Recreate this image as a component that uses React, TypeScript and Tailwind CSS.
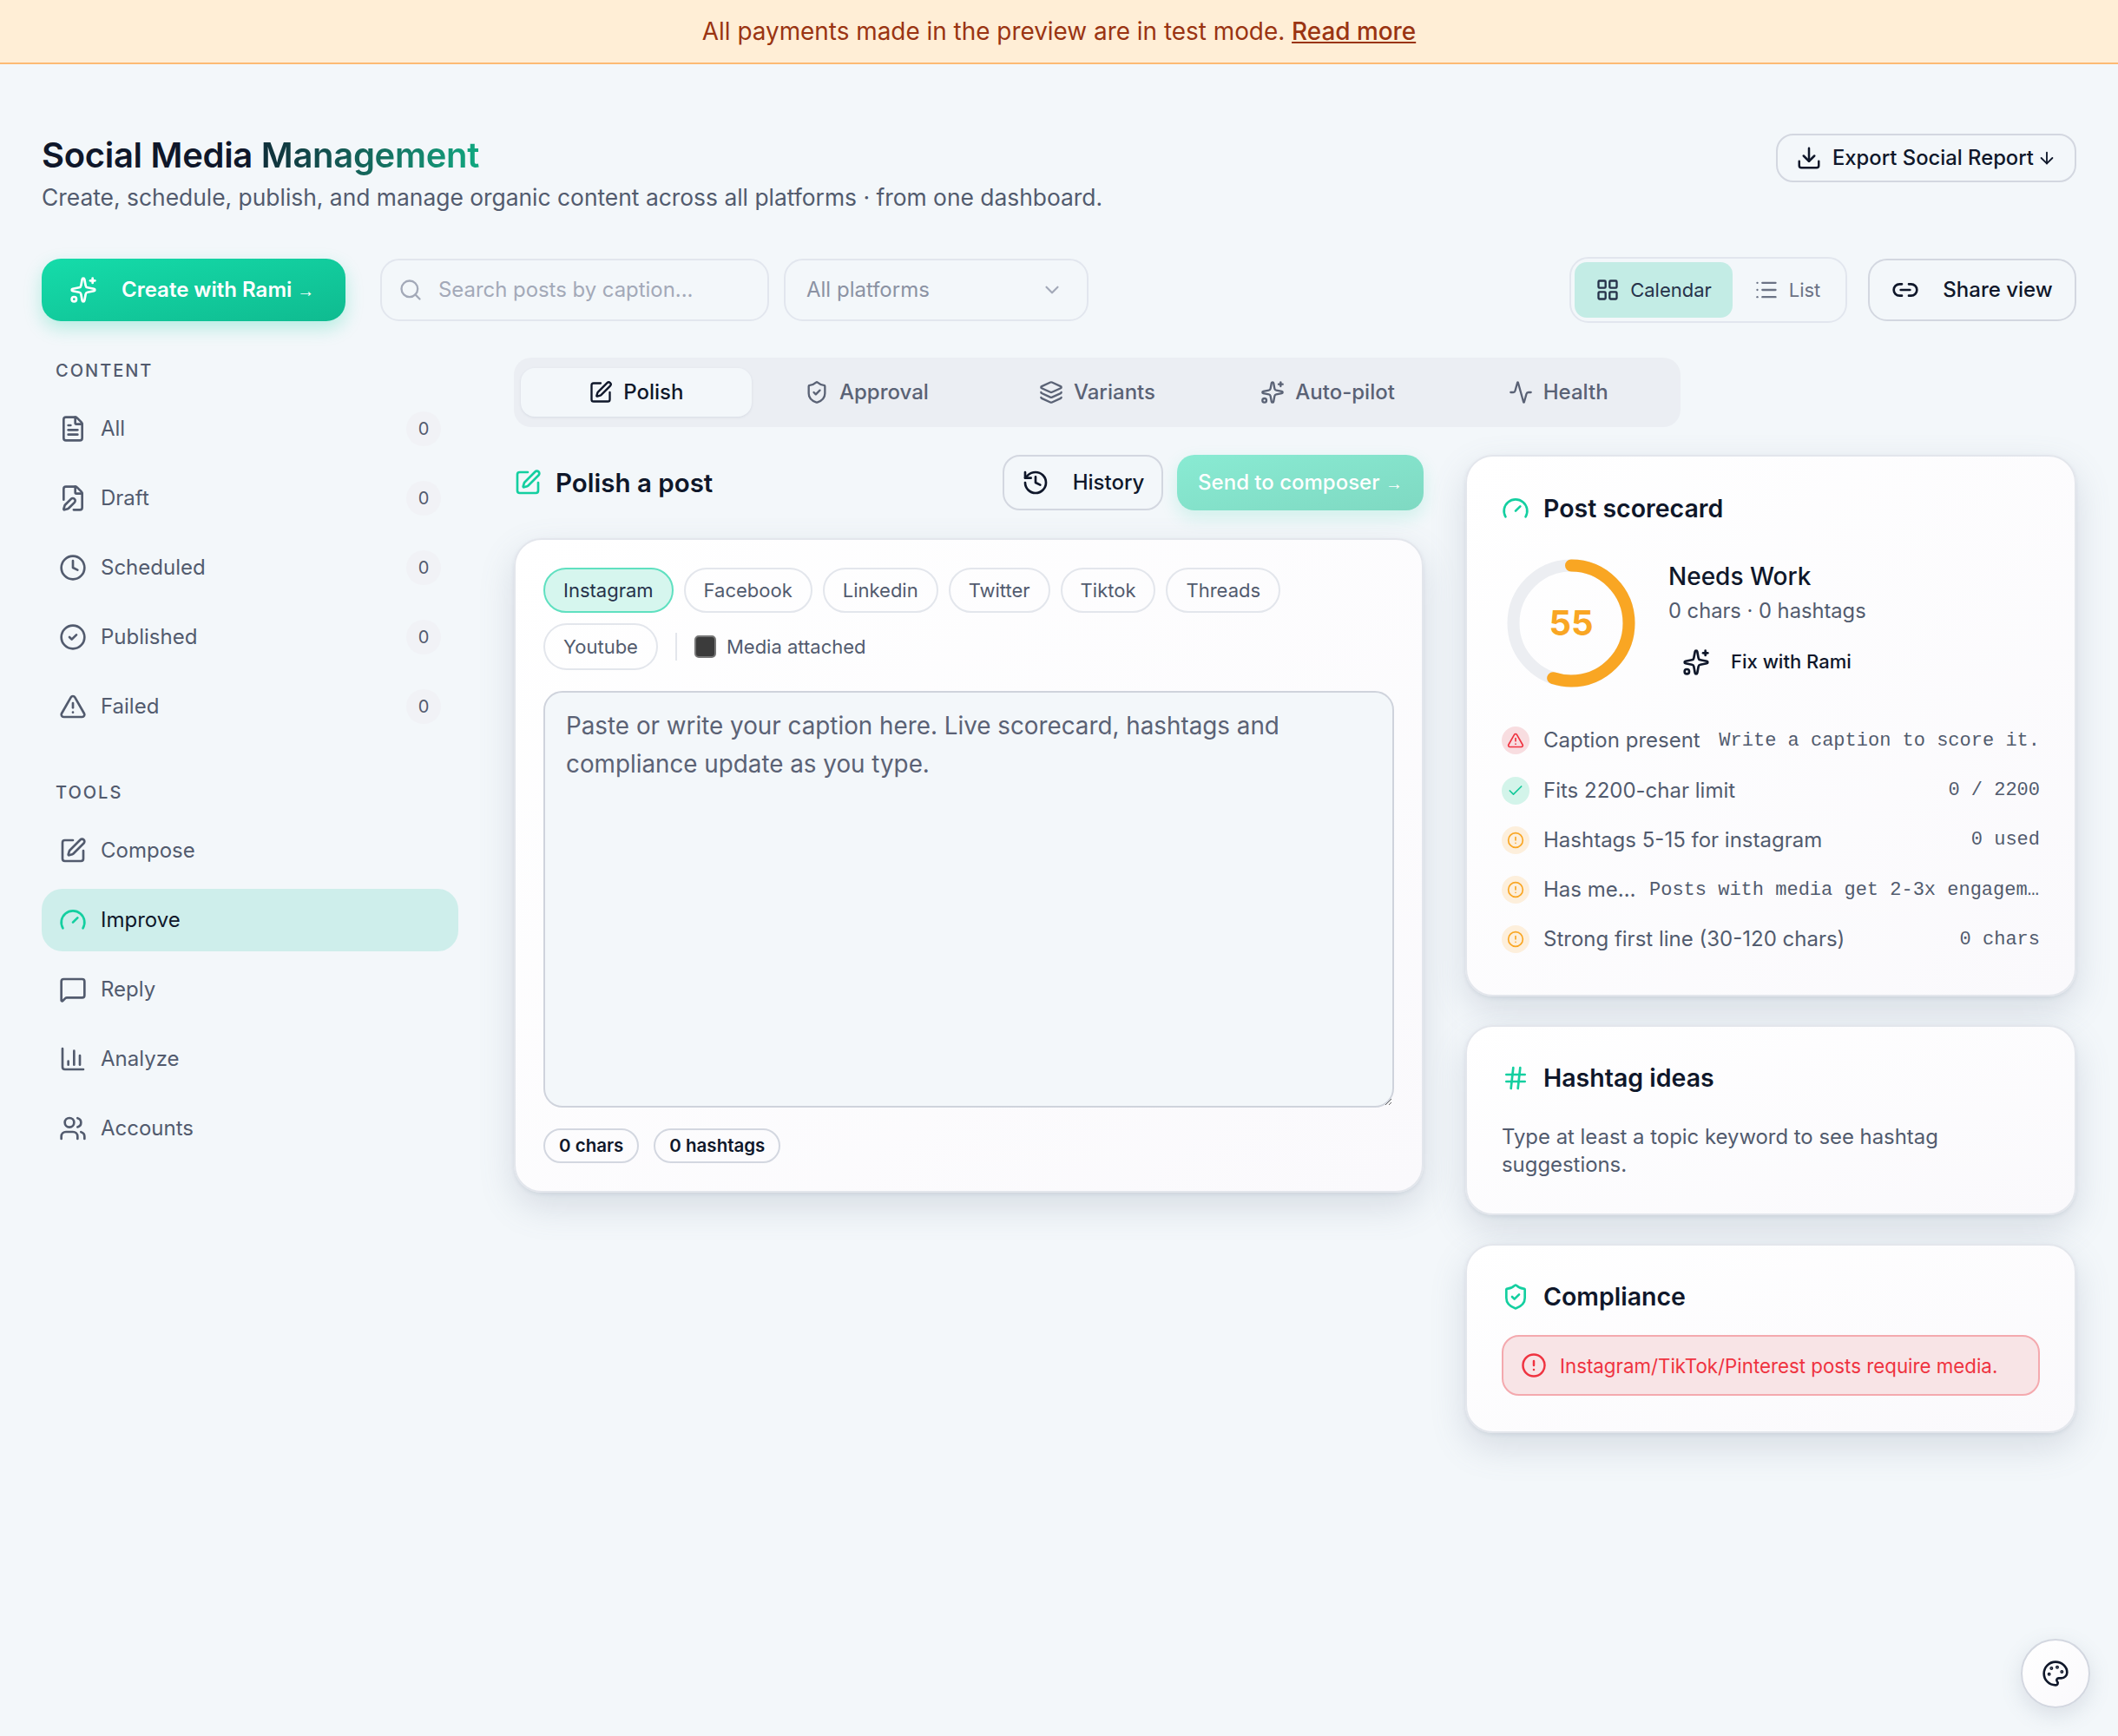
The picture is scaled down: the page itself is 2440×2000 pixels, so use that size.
import React from 'react';
import {
  Activity, ArrowDown, Check, ChevronDown, CircleAlert, CircleCheck, Clock, Download, FilePen, FileText, Gauge, Hash,
  History, Layers, LayoutGrid, Link2, List, MessageSquare, Palette, Search, ShieldCheck, Sparkles, SquarePen, TriangleAlert,
  ChartColumn, Users,
} from 'lucide-react';

const contentNav = [
  { label: 'All', icon: FileText },
  { label: 'Draft', icon: FilePen },
  { label: 'Scheduled', icon: Clock },
  { label: 'Published', icon: CircleCheck },
  { label: 'Failed', icon: TriangleAlert },
];

const toolsNav = [
  { label: 'Compose', icon: SquarePen },
  { label: 'Improve', icon: Gauge, active: true },
  { label: 'Reply', icon: MessageSquare },
  { label: 'Analyze', icon: ChartColumn },
  { label: 'Accounts', icon: Users },
];

const tabs = [
  { label: 'Polish', icon: SquarePen, active: true },
  { label: 'Approval', icon: ShieldCheck },
  { label: 'Variants', icon: Layers },
  { label: 'Auto-pilot', icon: Sparkles },
  { label: 'Health', icon: Activity },
];

const platforms = ['Facebook', 'Linkedin', 'Twitter', 'Tiktok', 'Threads'];

const checks = [
  { label: 'Caption present', note: 'Write a caption to score it.', kind: 'fail' },
  { label: 'Fits 2200-char limit', note: '0 / 2200', kind: 'ok' },
  { label: 'Hashtags 5-15 for instagram', note: '0 used', kind: 'warn' },
  { label: 'Has media attached', note: 'Posts with media get 2-3x engagement on this platform', kind: 'warn' },
  { label: 'Strong first line (30-120 chars)', note: '0 chars', kind: 'warn' },
];

const cardClass =
  'rounded-[32px] border-2 border-[#e3e6ec] bg-gradient-to-br from-white to-[#faf9fc] shadow-[0_2px_4px_rgba(100,116,139,0.12),0_16px_40px_rgba(100,116,139,0.2)]';

function CheckIcon({ kind }: { kind: string }) {
  if (kind === 'fail') {
    return (
      <span className="flex h-8 w-8 shrink-0 items-center justify-center rounded-full bg-[#f8dde0] text-[#ef3340]">
        <TriangleAlert size={20} />
      </span>
    );
  }
  if (kind === 'ok') {
    return (
      <span className="flex h-8 w-8 shrink-0 items-center justify-center rounded-full bg-[#d3f4ea] text-[#14c99a]">
        <Check size={20} />
      </span>
    );
  }
  return (
    <span className="flex h-8 w-8 shrink-0 items-center justify-center rounded-full bg-[#fdefdc] text-[#f9a623]">
      <CircleAlert size={20} />
    </span>
  );
}

function NavRow({ item, count }: { item: { label: string; icon: React.ElementType; active?: boolean }; count?: boolean }) {
  const Icon = item.icon;
  return (
    <div
      className={`flex h-[72px] items-center rounded-[24px] pl-5 pr-5 text-[24px] ${
        item.active ? 'bg-[#ceeeeb] text-[#0f172a]' : 'text-[#525b6e]'
      }`}
    >
      <Icon size={32} className={`mr-4 shrink-0 ${item.active ? 'text-[#14cfa0]' : ''}`} />
      <span className="flex-1">{item.label}</span>
      {count && (
        <span className="flex h-10 w-10 items-center justify-center rounded-full bg-[#f1f2f6] text-[20px] text-[#525b6e]">0</span>
      )}
    </div>
  );
}

export default function App() {
  return (
    <div className="relative min-h-[2000px] bg-[#f3f7fa] font-['Inter',sans-serif] text-[#0f172a]">
      <div className="flex h-[74px] items-center justify-center border-b-2 border-[#fdba74] bg-[#ffeed6] text-[27.9px] text-[#9a3412]">
        <span className="pt-[2px]">
          All payments made in the preview are in test mode. <span className="font-medium underline">Read more</span>
        </span>
      </div>

      <div className="px-12 pt-20">
        <div className="flex items-start justify-between">
          <div>
            <h1 className="text-[40px] font-semibold leading-[50px] tracking-[-0.3px]">
              Social Media{' '}
              <span className="bg-gradient-to-r from-[#0f2f3a] to-[#10a880] bg-clip-text text-transparent">Management</span>
            </h1>
            <p className="mt-[3px] text-[26.4px] leading-[40px] text-[#525b6e]">
              Create, schedule, publish, and manage organic content across all platforms · from one dashboard.
            </p>
          </div>
          <button className="flex h-[56px] w-[346px] items-center justify-center gap-3 rounded-[20px] border-2 border-[#d3d7e0] text-[23.8px] font-medium">
            <Download size={30} />
            <span className="flex items-center gap-1">
              Export Social Report <ArrowDown size={22} />
            </span>
          </button>
        </div>

        <div className="mt-[49px] flex items-center">
          <button className="flex h-[72px] w-[350px] items-center gap-[28px] rounded-[22px] bg-gradient-to-br from-[#15dcaa] to-[#0fbb90] pl-[32px] text-[24px] font-semibold text-white shadow-[0_8px_20px_rgba(20,212,164,0.28)]">
            <Sparkles size={32} className="shrink-0" />
            <span>
              Create with Rami <span className="font-['Liberation_Sans',sans-serif] text-[20px] font-normal">→</span>
            </span>
          </button>
          <div className="ml-10 flex h-[72px] w-[448px] items-center gap-[18px] rounded-[22px] border-2 border-[#e2e6ee] pl-[19px] text-[23.9px] text-[#a3a9b8]">
            <Search size={28} className="shrink-0" />
            <span>Search posts by caption...</span>
          </div>
          <div className="ml-[17px] flex h-[72px] w-[351px] items-center justify-between rounded-[22px] border-2 border-[#e2e6ee] pl-6 pr-[27px] text-[24px] text-[#8b92a3]">
            <span>All platforms</span>
            <ChevronDown size={26} className="text-[#a3a9b8]" />
          </div>
          <div className="ml-auto flex h-[76px] w-[320px] items-center rounded-[22px] border-2 border-[#e2e6ee] pl-1 pr-1">
            <div className="flex h-16 w-[182px] items-center justify-center gap-3 rounded-[14px] bg-[#c3ece5] text-[22px] text-[#26324a]">
              <LayoutGrid size={28} />
              Calendar
            </div>
            <div className="flex flex-1 items-center justify-center gap-3 text-[22px] text-[#6b7385]">
              <List size={28} />
              List
            </div>
          </div>
          <button className="ml-6 flex h-[72px] w-[240px] items-center justify-center gap-[27px] rounded-[22px] border-2 border-[#d3d7e0] text-[24px] font-medium">
            <Link2 size={32} />
            Share view
          </button>
        </div>

        <div className="mt-10 flex gap-16">
          <aside className="w-[480px] shrink-0">
            <div className="pl-4 pt-px text-[20px] font-medium leading-[28px] tracking-[2px] text-[#525b6e]">CONTENT</div>
            <div className="mt-[17px] flex flex-col gap-2">
              {contentNav.map((item) => (
                <NavRow key={item.label} item={item} count />
              ))}
            </div>
            <div className="mt-[49px] pl-4 text-[20px] font-medium leading-[28px] tracking-[2px] text-[#525b6e]">TOOLS</div>
            <div className="mt-[17px] flex flex-col gap-2">
              {toolsNav.map((item) => (
                <NavRow key={item.label} item={item} />
              ))}
            </div>
          </aside>

          <main className="w-[1800px]">
            <div className="flex h-20 w-[1344px] items-center rounded-[20px] bg-[#ebeef3] px-2">
              {tabs.map((tab) => {
                const Icon = tab.icon;
                return (
                  <div
                    key={tab.label}
                    className={`flex h-14 flex-1 items-center justify-center gap-3 rounded-[16px] text-[24px] font-medium ${
                      tab.active ? 'bg-[#f3f7fa] text-[#0f172a] shadow-[0_1px_3px_rgba(100,116,139,0.15)]' : 'text-[#5a6275]'
                    }`}
                  >
                    <Icon size={28} />
                    {tab.label}
                  </div>
                );
              })}
            </div>

            <div className="mt-8 grid grid-cols-[1048px_704px] gap-12">
              <section>
                <div className="flex h-16 items-center">
                  <SquarePen size={32} className="text-[#14cfa0]" />
                  <h2 className="ml-4 text-[29.5px] font-semibold">Polish a post</h2>
                  <button className="ml-auto flex h-16 w-[185px] items-center justify-center gap-[27px] rounded-[20px] border-2 border-[#d3d7e0] text-[24px] font-medium">
                    <History size={32} />
                    History
                  </button>
                  <button className="ml-4 h-16 w-[284px] rounded-[20px] bg-gradient-to-br from-[#89ebd3] to-[#7fd9c2] text-[24px] font-medium text-white shadow-[0_8px_20px_rgba(20,212,164,0.16)]">
                    Send to composer <span className="font-['Liberation_Sans',sans-serif] text-[20px] font-normal">→</span>
                  </button>
                </div>

                <div className={`mt-8 px-8 pb-8 pt-8 ${cardClass}`}>
                  <div className="flex flex-wrap items-center gap-x-3 gap-y-3">
                    <span className="flex h-[52px] items-center rounded-full border-2 border-[#5fe0c0] bg-[#d6f6ee] px-[21px] text-[22px] text-[#26324a]">
                      Instagram
                    </span>
                    {platforms.map((p) => (
                      <span key={p} className="flex h-[52px] items-center rounded-full border-2 border-[#e3e6ec] px-[21px] text-[22px] text-[#525b6e]">
                        {p}
                      </span>
                    ))}
                    <span className="flex h-[54px] items-center rounded-full border-2 border-[#e3e6ec] px-[21px] text-[22px] text-[#525b6e]">
                      Youtube
                    </span>
                    <span className="mx-[8px] h-8 w-[2px] bg-[#e3e6ec]" />
                    <span className="flex items-center gap-3 text-[22px] text-[#525b6e]">
                      <span className="h-[26px] w-[25px] rounded-[5px] border-2 border-[#767676] bg-[#3b3b3b]" />
                      Media attached
                    </span>
                  </div>

                  <textarea
                    readOnly
                    placeholder="Paste or write your caption here. Live scorecard, hashtags and compliance update as you type."
                    className="mt-6 block h-[480px] w-full rounded-[22px] border-2 border-[#cfd3dc] bg-[#f3f7fa] px-6 pb-5 pt-4 text-[27.8px] leading-[44px] outline-none placeholder:text-[#5b6275]"
                  />

                  <div className="mt-6 flex gap-[17px]">
                    <span className="flex h-10 items-center rounded-full border-2 border-[#d3d7e0] px-[16px] text-[20.5px] font-semibold">0 chars</span>
                    <span className="flex h-10 items-center rounded-full border-2 border-[#d3d7e0] px-[16px] text-[20.5px] font-semibold">0 hashtags</span>
                  </div>
                </div>
              </section>

              <section className="flex flex-col gap-[33px]">
                <div className={`px-10 pb-[47px] pt-[39px] ${cardClass}`}>
                  <div className="flex items-center gap-4">
                    <Gauge size={32} className="text-[#14cfa0]" />
                    <h3 className="text-[28.5px] font-semibold">Post scorecard</h3>
                  </div>
                  <div className="mt-9 flex items-start">
                    <div className="relative ml-[6px] h-[148px] w-[148px] shrink-0">
                      <svg viewBox="0 0 148 148" className="h-full w-full -rotate-90">
                        <circle cx="74" cy="74" r="66.5" fill="none" stroke="#eceef2" strokeWidth="14" />
                        <circle
                          cx="74"
                          cy="74"
                          r="66.5"
                          fill="none"
                          stroke="#f9a623"
                          strokeWidth="14"
                          strokeLinecap="round"
                          strokeDasharray="229.8 418"
                        />
                      </svg>
                      <span className="absolute inset-0 flex items-center justify-center text-[40px] font-bold text-[#f9a623]">55</span>
                    </div>
                    <div className="ml-[38px] pt-px">
                      <div className="text-[28px] font-medium leading-[38px]">Needs Work</div>
                      <div className="mt-[3px] text-[23.7px] leading-[36px] text-[#525b6e]">0 chars · 0 hashtags</div>
                      <div className="mt-4 flex h-[50px] items-center pl-4 text-[22px] font-medium">
                        <Sparkles size={32} className="mr-6" />
                        Fix with Rami
                      </div>
                    </div>
                  </div>
                  <div className="mt-[45px] flex flex-col gap-[24.3px]">
                    {checks.map((row) => (
                      <div key={row.label} className="flex h-[33px] items-center gap-4">
                        <CheckIcon kind={row.kind} />
                        <div className="flex min-w-0 flex-1 items-center justify-between gap-3">
                          <span className="truncate text-[24px] text-[#525b6e]">{row.label}</span>
                          <span className="max-w-[450px] shrink-0 truncate font-['Liberation_Mono',monospace] text-[22px] text-[#525b6e]">{row.note}</span>
                        </div>
                      </div>
                    ))}
                  </div>
                </div>

                <div className={`px-10 pb-[40px] pt-[38px] ${cardClass}`}>
                  <div className="flex items-center gap-4">
                    <Hash size={32} className="text-[#14cfa0]" />
                    <h3 className="text-[28.5px] font-semibold">Hashtag ideas</h3>
                  </div>
                  <p className="mt-[30px] text-[23.9px] leading-[32px] text-[#525b6e]">Type at least a topic keyword to see hashtag suggestions.</p>
                </div>

                <div className={`px-10 pb-[41px] pt-[38px] ${cardClass}`}>
                  <div className="flex items-center gap-4">
                    <ShieldCheck size={32} className="text-[#14cfa0]" />
                    <h3 className="text-[28.5px] font-semibold">Compliance</h3>
                  </div>
                  <div className="mt-[23px] flex h-[70px] items-center gap-[15px] rounded-[20px] border-2 border-[#f4a9ae] bg-[#f8e4e6] pl-5 text-[22.3px] text-[#ef3340]">
                    <CircleAlert size={30} />
                    Instagram/TikTok/Pinterest posts require media.
                  </div>
                </div>
              </section>
            </div>
          </main>
        </div>
      </div>

      <button className="absolute left-[2328px] top-[1888px] flex h-[80px] w-[80px] items-center justify-center rounded-full border-2 border-[#d3d7e0] bg-gradient-to-br from-white to-[#faf9fc] shadow-[0_8px_24px_rgba(100,116,139,0.18)]">
        <Palette size={32} />
      </button>
    </div>
  );
}
